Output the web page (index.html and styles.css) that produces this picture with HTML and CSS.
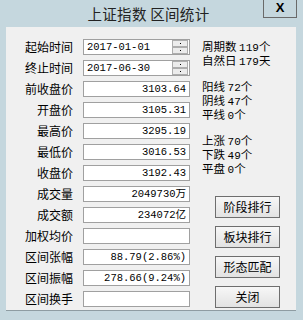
FILE: index.html
```html
<html>
<head>
	<link rel="stylesheet" href="styles.css">
</head>
<body>
	<div class="titlebar">
		<span></span>
		<div class="title">上证指数 区间统计</div>
		<div class="close">X</div>
	</div>
	<div class="panel">
		<div class="fields">
			<div class="row"><label>起始时间</label><div class="box date">2017-01-01<div class="spin"><i></i><i></i></div></div></div>
			<div class="row"><label>终止时间</label><div class="box date">2017-06-30<div class="spin"><i></i><i></i></div></div></div>
			<div class="row"><label>前收盘价</label><div class="box">3103.64</div></div>
			<div class="row"><label>开盘价</label><div class="box">3105.31</div></div>
			<div class="row"><label>最高价</label><div class="box">3295.19</div></div>
			<div class="row"><label>最低价</label><div class="box">3016.53</div></div>
			<div class="row"><label>收盘价</label><div class="box">3192.43</div></div>
			<div class="row"><label>成交量</label><div class="box">2049730万</div></div>
			<div class="row"><label>成交额</label><div class="box">234072亿</div></div>
			<div class="row"><label>加权均价</label><div class="box"></div></div>
			<div class="row"><label>区间张幅</label><div class="box">88.79(2.86%)</div></div>
			<div class="row"><label>区间振幅</label><div class="box">278.66(9.24%)</div></div>
			<div class="row"><label>区间换手</label><div class="box"></div></div>
		</div>
		<div class="side">
			<div class="stats">
				<div class="group">
					<p>周期数 <span class="num">119</span>个</p>
					<p>自然日 <span class="num">179</span>天</p>
				</div>
				<div class="group">
					<p>阳线 <span class="num">72</span>个</p>
					<p>阴线 <span class="num">47</span>个</p>
					<p>平线 <span class="num">0</span>个</p>
				</div>
				<div class="group">
					<p>上涨 <span class="num">70</span>个</p>
					<p>下跌 <span class="num">49</span>个</p>
					<p>平盘 <span class="num">0</span>个</p>
				</div>
			</div>
			<div class="buttons">
				<div class="btn">阶段排行</div>
				<div class="btn">板块排行</div>
				<div class="btn">形态匹配</div>
				<div class="btn">关闭</div>
			</div>
		</div>
	</div>
</body>
</html>
```
FILE: styles.css
```css
body {
	margin: 0;
	width: 303px;
	height: 320px;
	background: #c5d7de;
	font-family: "Noto Sans CJK SC", "Liberation Sans", sans-serif;
	font-size: 12px;
	color: #000;
	overflow: hidden;
}

.titlebar {
	display: grid;
	grid-template-columns: 1fr auto 1fr;
	height: 27px;
	padding-right: 6px;
}
.title {
	font-size: 14.5px;
	line-height: 27px;
	color: #222;
	letter-spacing: 0.3px;
}
.close {
	justify-self: end;
	align-self: start;
	width: 32px;
	height: 17px;
	border: 1px solid #6a6a6a;
	border-top: none;
	font-family: "Liberation Sans", sans-serif;
	font-weight: bold;
	font-size: 13px;
	line-height: 15px;
	text-align: center;
}

.panel {
	display: flex;
	margin-left: 6px;
	width: 290px;
	height: 283px;
	background: #f0f0f0;
	border-bottom: 1px solid #8e9ca2;
}

.fields {
	display: flex;
	flex-direction: column;
	gap: 5px;
	padding-top: 12px;
}
.row {
	display: flex;
	align-items: center;
	gap: 10px;
}
.row label {
	width: 67px;
	text-align: right;
	line-height: 16px;
}
.box {
	position: relative;
	box-sizing: border-box;
	width: 107px;
	height: 16px;
	border: 1px solid #a0a0a0;
	background: #fff;
	padding: 0 3px;
	text-align: right;
	font-family: "Liberation Mono", "Noto Sans CJK SC", monospace;
	font-size: 10.5px;
	line-height: 14px;
}
.date {
	text-align: left;
}
.spin {
	position: absolute;
	top: 0;
	right: 1px;
	display: flex;
	flex-direction: column;
}
.spin i {
	box-sizing: border-box;
	width: 16px;
	height: 7px;
	border: 1px solid #adadad;
	background: #ececec;
	position: relative;
}
.spin i::after {
	content: "";
	position: absolute;
	left: 7px;
	top: 2px;
	width: 1px;
	height: 1px;
	background: #000;
}

.side {
	display: flex;
	flex-direction: column;
	padding-left: 12px;
}
.stats {
	padding-top: 13px;
	display: flex;
	flex-direction: column;
	gap: 12px;
	height: 144px;
}
.stats p {
	margin: 0;
	font-size: 11.5px;
	line-height: 12px;
	white-space: nowrap;
}
.num {
	font-family: "Liberation Mono", monospace;
	font-size: 11px;
}

.buttons {
	display: flex;
	flex-direction: column;
	gap: 8px;
	padding-left: 13px;
	margin-top: 12px;
}
.btn {
	box-sizing: border-box;
	width: 65px;
	height: 22px;
	border: 1px solid #6e6e6e;
	background: linear-gradient(#f7f7f7, #e2e2e2);
	text-align: center;
	line-height: 20px;
	font-size: 12px;
}
```
